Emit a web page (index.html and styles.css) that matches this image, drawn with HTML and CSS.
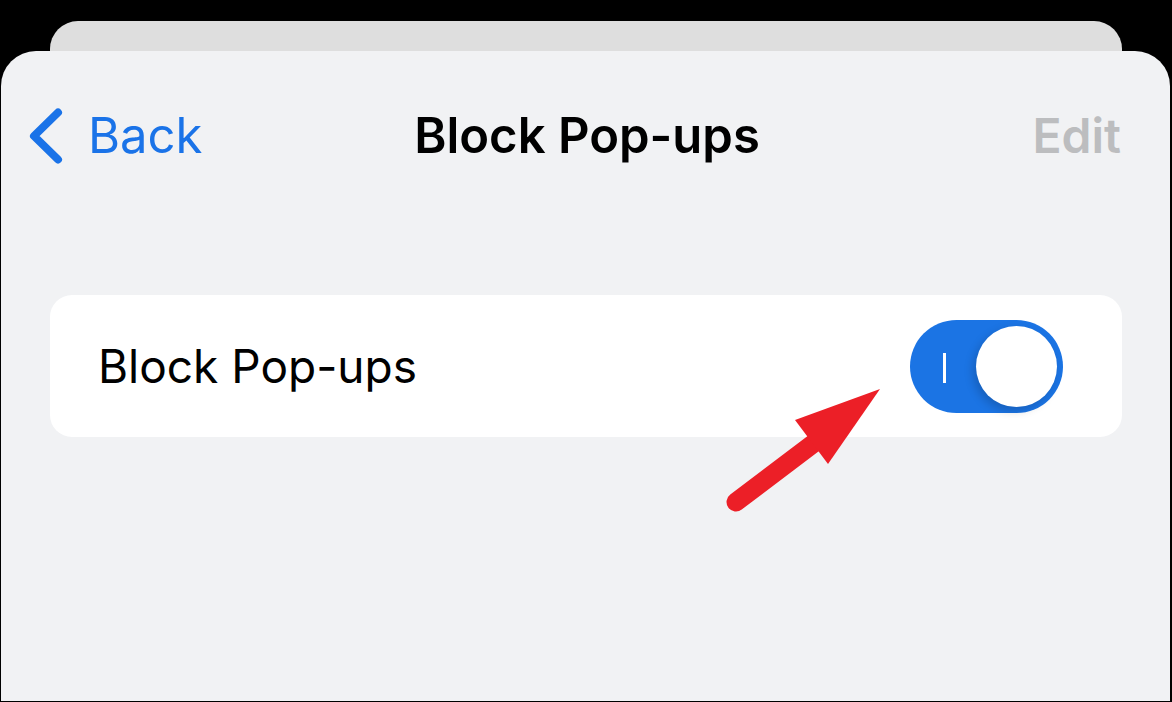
FILE: index.html
```html
<!DOCTYPE html>
<html lang="en">
  <head>
    <meta charset="UTF-8" />
    <meta name="viewport" content="width=device-width, initial-scale=1.0" />
    <title>Block Pop-ups</title>
    <link rel="stylesheet" href="styles.css">
  </head>
  <body>
    <div class="screen">
      <div class="sheet-back"></div>
      <div class="sheet">
        <div class="navbar">
          <a class="back" href="#">
            <svg class="chevron" width="40" height="60" viewBox="0 0 40 60">
              <polyline points="32,6.5 8,30 32,53.5" fill="none" stroke="#1a73e8" stroke-width="8" stroke-linecap="round" stroke-linejoin="round" />
            </svg>
            <span>Back</span>
          </a>
          <h1 class="title">Block Pop-ups</h1>
          <span class="edit">Edit</span>
        </div>

        <div class="card">
          <span class="label">Block Pop-ups</span>
          <div class="toggle">
            <span class="toggle-mark"></span>
            <span class="knob"></span>
          </div>
        </div>
      </div>

      <!-- red pointer arrow drawn over the screenshot -->
      <svg class="pointer" width="1172" height="702" viewBox="0 0 1172 702">
        <line x1="736" y1="502" x2="818" y2="440" stroke="#ec1f27" stroke-width="19" stroke-linecap="round" />
        <polygon points="880,389 795,420 828,464" fill="#ec1f27" />
      </svg>
    </div>
  </body>
</html>
```

FILE: styles.css
```css
body {
  margin: 0;
  padding: 0;
  background: #000;
  font-family: Inter, "Liberation Sans", Arial, sans-serif;
}

.screen {
  position: relative;
  width: 1172px;
  height: 702px;
  overflow: hidden;
  display: flex;
  flex-direction: column;
}

.sheet-back {
  height: 30px;
  margin: 21px 50px 0 50px;
  background: #dedede;
  border-radius: 28px 28px 0 0;
}

.sheet {
  height: 650px;
  margin: 0 2px 0 1px;
  background: #f1f2f4;
  border-radius: 35px 35px 0 0;
}

.navbar {
  display: grid;
  grid-template-columns: 1fr auto 1fr;
  align-items: center;
  height: 60px;
  padding: 55px 22px 0 25px;
}

.back {
  display: flex;
  align-items: center;
  gap: 22px;
  color: #1a73e8;
  text-decoration: none;
  font-size: 49px;
  line-height: 60px;
}

.chevron {
  display: block;
}

.title {
  margin: 0;
  font-size: 49px;
  font-weight: 600;
  line-height: 60px;
  color: #000;
}

.edit {
  justify-self: end;
  margin-right: 27px;
  font-size: 48px;
  font-weight: 600;
  line-height: 60px;
  color: #bcbdbf;
}

.card {
  display: flex;
  align-items: center;
  justify-content: space-between;
  height: 142px;
  margin: 129px 48px 0 49px;
  padding: 0 59px 0 48px;
  background: #fff;
  border-radius: 22px;
}

.label {
  font-size: 46px;
  line-height: 56px;
  color: #000;
}

.toggle {
  position: relative;
  width: 153px;
  height: 93px;
  border-radius: 47px;
  background: #1b74e4;
}

.toggle-mark {
  position: absolute;
  left: 33px;
  top: 33px;
  width: 3px;
  height: 30px;
  background: #fff;
}

.knob {
  position: absolute;
  right: 6px;
  top: 6px;
  width: 81px;
  height: 81px;
  border-radius: 50%;
  background: #fff;
  box-shadow: -3px 4px 10px rgba(0, 0, 0, 0.18);
}

.pointer {
  position: absolute;
  left: 0;
  top: 0;
  pointer-events: none;
}
```
